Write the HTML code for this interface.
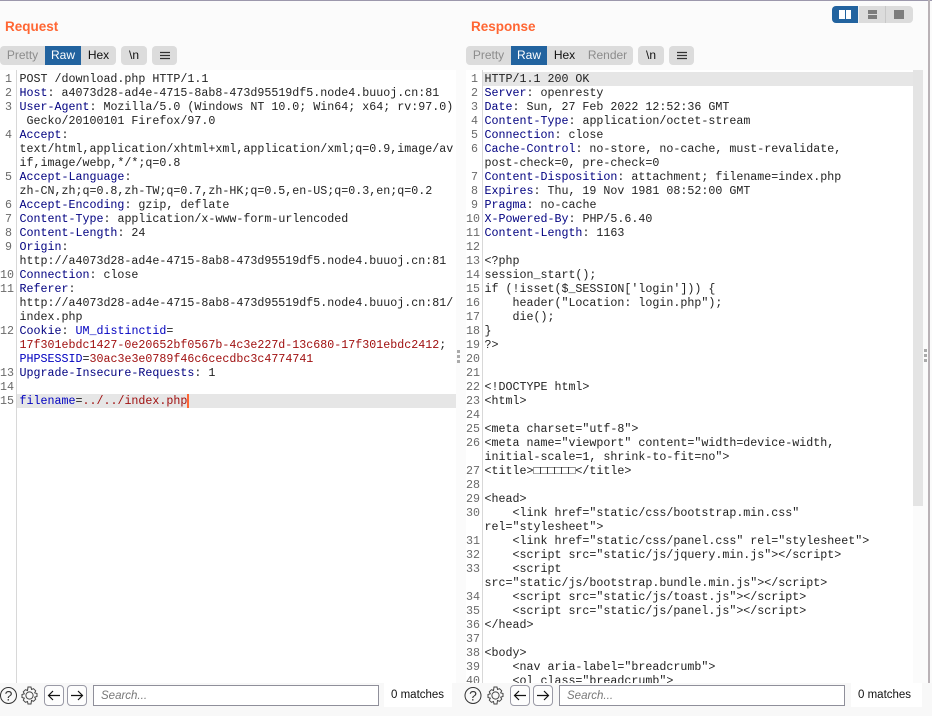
<!DOCTYPE html>
<html><head><meta charset="utf-8">
<style>
html,body{margin:0;padding:0;width:932px;height:716px;overflow:hidden;background:#fbfbfb;font-family:"Liberation Sans",sans-serif}
.a{position:absolute}
#top{left:0;top:0;width:932px;height:1px;background:#9c98ac}
.ttl{top:18px;font-size:13.5px;font-weight:bold;color:#ff6633;line-height:18px}
.grp{top:46px;height:19px;background:#dcdcdc;border-radius:4px;font-size:12px;line-height:19px;color:#111}
.tab{position:absolute;top:0;height:19px;text-align:center}
.on{background:#22639f;color:#fff}
.dim{color:#8c8c8c}
.ed{top:70px;height:613px;background:#fff}
.gl{top:70px;width:1px;height:613px;background:#d8d8d8}
.code{top:72px;font-family:"Liberation Mono",monospace;font-size:11.67px;line-height:14px;color:#222;white-space:pre;margin:0}
.nums{top:72px;font-family:"Liberation Mono",monospace;font-size:11.67px;line-height:14px;color:#6a6a6a;white-space:pre;text-align:right;margin:0}
.h{color:#000080}.b{color:#0000c0}.r{color:#a01010}
.bar{left:0;top:683px;width:932px;height:33px;background:#f8f8f8}
.s{top:685px;width:284px;height:19px;background:#fff;border:1px solid #8f8f9a;font-size:11.5px;font-style:italic;color:#777;line-height:21px;text-indent:7px}
.m{top:683px;height:24px;background:#fff;font-size:11.5px;line-height:25px;color:#111;padding-left:7px;box-sizing:border-box}
.nb{top:685px;width:18px;height:19px;border:1px solid #9a9aa6;border-radius:4px;background:#fdfdfd}
svg{position:absolute;display:block}
</style></head><body>
<div class="a" id="top"></div>
<div class="a" style="left:928px;top:0;width:2px;height:716px;background:#b9b2b6"></div>

<div class="a ttl" style="left:5px">Request</div>
<div class="a ttl" style="left:471px">Response</div>

<div class="a grp" style="left:0;width:116px">
<div class="tab dim" style="left:0;width:45px">Pretty</div><div class="tab on" style="left:45px;width:36px">Raw</div><div class="tab" style="left:81px;width:35px">Hex</div></div>
<div class="a grp" style="left:121px;width:26px;text-align:center">\n</div>
<div class="a grp" style="left:152px;width:25px"><svg width="25" height="19"><path d="M8 6.500h10M8 9.500h10M8 12.500h10" stroke="#333" stroke-width="1.300"/></svg></div>

<div class="a grp" style="left:466px;width:167px">
<div class="tab dim" style="left:0;width:45px">Pretty</div><div class="tab on" style="left:45px;width:36px">Raw</div><div class="tab" style="left:81px;width:35px">Hex</div><div class="tab dim" style="left:116px;width:51px">Render</div></div>
<div class="a grp" style="left:638px;width:26px;text-align:center">\n</div>
<div class="a grp" style="left:669px;width:25px"><svg width="25" height="19"><path d="M8 6.500h10M8 9.500h10M8 12.500h10" stroke="#333" stroke-width="1.300"/></svg></div>

<div class="a" style="left:832px;top:6px;width:81px;height:17px;background:#dcdcdc;border-radius:4px;overflow:hidden">
<div class="a" style="left:0;top:0;width:26px;height:17px;background:#22639f"></div>
<div class="a" style="left:7px;top:4px;width:12px;height:9px;background:#fff;"></div>
<div class="a" style="left:12.500px;top:4px;width:1px;height:9px;background:#22639f"></div>
<div class="a" style="left:26px;top:0;width:1px;height:17px;background:#f0f0f0"></div>
<div class="a" style="left:53px;top:0;width:1px;height:17px;background:#c8c8c8"></div>
<div class="a" style="left:36px;top:4px;width:9px;height:4px;background:#7d7d7d"></div>
<div class="a" style="left:36px;top:9px;width:9px;height:4px;background:#7d7d7d"></div>
<div class="a" style="left:62px;top:4px;width:10px;height:9px;background:#7d7d7d"></div>
</div>

<div class="a ed" style="left:0;width:456px"></div>
<div class="a ed" style="left:466px;width:447px"></div>
<div class="a gl" style="left:16px"></div>
<div class="a gl" style="left:482px"></div>
<div class="a" style="left:17px;top:394px;width:439px;height:14px;background:#e6e6e6"></div>
<div class="a" style="left:483px;top:72px;width:430px;height:14px;background:#e6e6e6"></div>
<div class="a" style="left:913px;top:70px;width:10px;height:436px;background:#e4e4e4"></div>
<div class="a" style="left:187px;top:394px;width:2px;height:14px;background:#ff6633"></div>

<div class="a" style="left:457px;top:350px;width:3px;height:3px;background:#aaa"></div>
<div class="a" style="left:457px;top:355px;width:3px;height:3px;background:#aaa"></div>
<div class="a" style="left:457px;top:360px;width:3px;height:3px;background:#aaa"></div>
<div class="a" style="left:924px;top:349px;width:3px;height:3px;background:#aaa"></div>
<div class="a" style="left:924px;top:354px;width:3px;height:3px;background:#aaa"></div>
<div class="a" style="left:924px;top:359px;width:3px;height:3px;background:#aaa"></div>

<pre class="a nums" style="left:0;width:12px">1
2
3

4


5

6
7
8
9

10
11


12


13
14
15</pre>
<pre class="a code" style="left:19.500px;height:350px">POST /download.php HTTP/1.1
<span class="h">Host</span>: a4073d28-ad4e-4715-8ab8-473d95519df5.node4.buuoj.cn:81
<span class="h">User-Agent</span>: Mozilla/5.0 (Windows NT 10.0; Win64; x64; rv:97.0)
 Gecko/20100101 Firefox/97.0
<span class="h">Accept</span>:
text/html,application/xhtml+xml,application/xml;q=0.9,image/av
if,image/webp,*/*;q=0.8
<span class="h">Accept-Language</span>:
zh-CN,zh;q=0.8,zh-TW;q=0.7,zh-HK;q=0.5,en-US;q=0.3,en;q=0.2
<span class="h">Accept-Encoding</span>: gzip, deflate
<span class="h">Content-Type</span>: application/x-www-form-urlencoded
<span class="h">Content-Length</span>: 24
<span class="h">Origin</span>:
http://a4073d28-ad4e-4715-8ab8-473d95519df5.node4.buuoj.cn:81
<span class="h">Connection</span>: close
<span class="h">Referer</span>:
http://a4073d28-ad4e-4715-8ab8-473d95519df5.node4.buuoj.cn:81/
index.php
<span class="h">Cookie</span>: <span class="b">UM_distinctid</span>=
<span class="r">17f301ebdc1427-0e20652bf0567b-4c3e227d-13c680-17f301ebdc2412</span>;
<span class="b">PHPSESSID</span>=<span class="r">30ac3e3e0789f46c6cecdbc3c4774741</span>
<span class="h">Upgrade-Insecure-Requests</span>: 1

<span class="b">filename</span>=<span class="r">../../index.php</span></pre>

<div class="a" style="left:466px;top:70px;width:447px;height:613px;overflow:hidden">
<pre class="a nums" style="left:0;top:2px;width:12px">1
2
3
4
5
6

7
8
9
10
11
12
13
14
15
16
17
18
19
20
21
22
23
24
25
26

27
28
29
30

31
32
33

34
35
36
37
38
39
40</pre>
<pre class="a code" style="left:18.500px;top:2px">HTTP/1.1 200 OK
<span class="h">Server</span>: openresty
<span class="h">Date</span>: Sun, 27 Feb 2022 12:52:36 GMT
<span class="h">Content-Type</span>: application/octet-stream
<span class="h">Connection</span>: close
<span class="h">Cache-Control</span>: no-store, no-cache, must-revalidate,
post-check=0, pre-check=0
<span class="h">Content-Disposition</span>: attachment; filename=index.php
<span class="h">Expires</span>: Thu, 19 Nov 1981 08:52:00 GMT
<span class="h">Pragma</span>: no-cache
<span class="h">X-Powered-By</span>: PHP/5.6.40
<span class="h">Content-Length</span>: 1163

&lt;?php
session_start();
if (!isset($_SESSION['login'])) {
    header("Location: login.php");
    die();
}
?&gt;


&lt;!DOCTYPE html&gt;
&lt;html&gt;

&lt;meta charset="utf-8"&gt;
&lt;meta name="viewport" content="width=device-width,
initial-scale=1, shrink-to-fit=no"&gt;
&lt;title&gt;□□□□□□&lt;/title&gt;

&lt;head&gt;
    &lt;link href="static/css/bootstrap.min.css"
rel="stylesheet"&gt;
    &lt;link href="static/css/panel.css" rel="stylesheet"&gt;
    &lt;script src="static/js/jquery.min.js"&gt;&lt;/script&gt;
    &lt;script
src="static/js/bootstrap.bundle.min.js"&gt;&lt;/script&gt;
    &lt;script src="static/js/toast.js"&gt;&lt;/script&gt;
    &lt;script src="static/js/panel.js"&gt;&lt;/script&gt;
&lt;/head&gt;

&lt;body&gt;
    &lt;nav aria-label="breadcrumb"&gt;
    &lt;ol class="breadcrumb"&gt;</pre>
</div>

<div class="a bar"></div>

<!-- left footer -->
<svg style="left:0;top:686px" width="18" height="19"><circle cx="8.500" cy="9.500" r="8" fill="none" stroke="#333" stroke-width="1"/><text x="8.500" y="14.500" font-family="Liberation Sans" font-size="14" text-anchor="middle" fill="#333">?</text></svg>
<svg style="left:20px;top:686px" width="19" height="19" viewBox="0 0 19 19"><path d="M8 1h3l.5 2.500 2-.8 2.200 2.100-1 2 2.300.7v3l-2.300.7 1 2-2.200 2.100-2-.8L11 18H8l-.5-2.500-2 .8-2.200-2.100 1-2L2 11.500v-3l2.300-.7-1-2 2.200-2.100 2 .8z" fill="none" stroke="#444" stroke-width="1"/><circle cx="9.500" cy="9.500" r="3.600" fill="none" stroke="#444" stroke-width="1"/></svg>
<div class="a nb" style="left:44px"><svg width="18" height="19"><path d="M15 9.500H3.500M8 5L3.500 9.500 8 14" fill="none" stroke="#111" stroke-width="1.200"/></svg></div>
<div class="a nb" style="left:67px"><svg width="18" height="19"><path d="M3 9.500h11.500M10 5l4.500 4.500L10 14" fill="none" stroke="#111" stroke-width="1.200"/></svg></div>
<div class="a s" style="left:93px">Search...</div>
<div class="a m" style="left:384px;width:68px">0 matches</div>

<!-- right footer -->
<svg style="left:464px;top:686px" width="18" height="19"><circle cx="9" cy="9.500" r="8" fill="none" stroke="#333" stroke-width="1"/><text x="9" y="14.500" font-family="Liberation Sans" font-size="14" text-anchor="middle" fill="#333">?</text></svg>
<svg style="left:486px;top:686px" width="19" height="19" viewBox="0 0 19 19"><path d="M8 1h3l.5 2.500 2-.8 2.200 2.100-1 2 2.300.7v3l-2.300.7 1 2-2.200 2.100-2-.8L11 18H8l-.5-2.500-2 .8-2.200-2.100 1-2L2 11.500v-3l2.300-.7-1-2 2.200-2.100 2 .8z" fill="none" stroke="#444" stroke-width="1"/><circle cx="9.500" cy="9.500" r="3.600" fill="none" stroke="#444" stroke-width="1"/></svg>
<div class="a nb" style="left:510px"><svg width="18" height="19"><path d="M15 9.500H3.500M8 5L3.500 9.500 8 14" fill="none" stroke="#111" stroke-width="1.200"/></svg></div>
<div class="a nb" style="left:533px"><svg width="18" height="19"><path d="M3 9.500h11.500M10 5l4.500 4.500L10 14" fill="none" stroke="#111" stroke-width="1.200"/></svg></div>
<div class="a s" style="left:559px">Search...</div>
<div class="a m" style="left:851px;width:71px">0 matches</div>
</body></html>
